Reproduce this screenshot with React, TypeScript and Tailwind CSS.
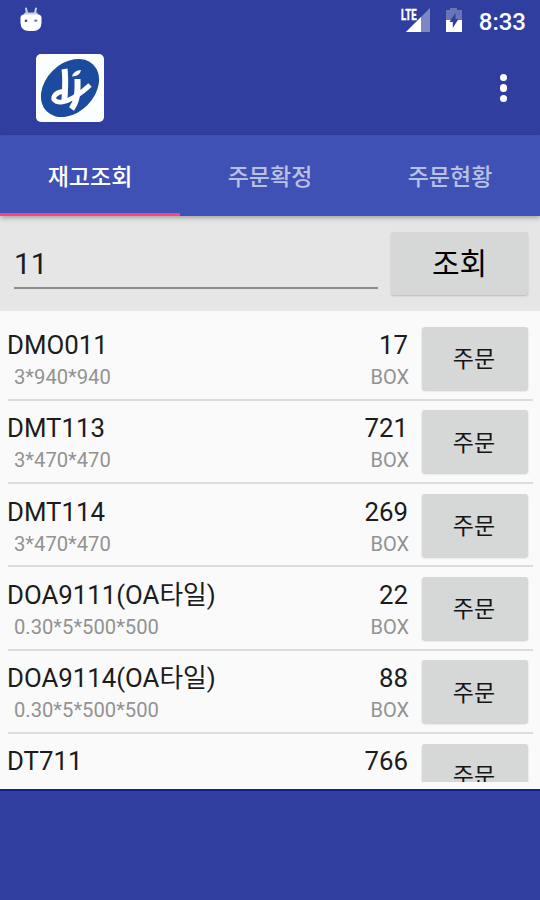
const tabs = ['재고조회', '주문확정', '주문현황'];

interface StockItem {
  code: string;
  spec?: string;
  qty: number;
}

const items: StockItem[] = [
  { code: 'DMO011', spec: '3*940*940', qty: 17 },
  { code: 'DMT113', spec: '3*470*470', qty: 721 },
  { code: 'DMT114', spec: '3*470*470', qty: 269 },
  { code: 'DOA9111(OA타일)', spec: '0.30*5*500*500', qty: 22 },
  { code: 'DOA9114(OA타일)', spec: '0.30*5*500*500', qty: 88 },
  { code: 'DT711', qty: 766 },
];

function DebugIcon() {
  return (
    <svg width="24" height="26" viewBox="0 0 24 26" fill="none">
      <path d="M7 1.5 L8 6 M17 1.5 L16 6" stroke="#c9cdea" strokeWidth="2" strokeLinecap="round" />
      <path d="M6 5.5 H18 L20 8.5 H4 Z" fill="#c9cdea" />
      <path d="M1.5 11 Q1.5 7.5 5 7.5 H19 Q22.5 7.5 22.5 11 V16 Q22 24 14 24 H10 Q2 24 1.5 16 Z" fill="#fff" />
      <circle cx="7" cy="13.7" r="1.3" fill="#303f9f" />
      <ellipse cx="16.8" cy="13.7" rx="1.8" ry="1.1" fill="#6d78bb" />
    </svg>
  );
}

function SignalIcon() {
  return (
    <svg width="32" height="26" viewBox="0 0 32 26">
      <path d="M31 1 V25 H7 Z" fill="#7d87c4" />
      <path d="M22 10 V25 H7 Z" fill="#fff" />
      <text x="2" y="12.5" fill="#fff" stroke="#fff" strokeWidth="0.3" fontSize="14.5" fontWeight="800" fontFamily="Roboto, sans-serif" textLength="15.5" lengthAdjust="spacingAndGlyphs">LTE</text>
    </svg>
  );
}

function BatteryIcon() {
  return (
    <svg width="18" height="26" viewBox="0 0 18 26">
      <path d="M5 1 H12 V3 H17 V13 H1 V3 H5 Z" fill="#6873b8" />
      <path d="M1 13 H17 V25 H1 Z" fill="#fff" />
      <path d="M10.5 6 L4.5 15 H7.8 V21 L13.5 12 H10.5 Z" fill="#303f9f" />
    </svg>
  );
}

function Logo() {
  return (
    <svg width="68" height="68" viewBox="0 0 68 68" fill="none">
      <rect width="68" height="68" rx="5" fill="#fcfdfd" />
      <ellipse cx="34" cy="34" rx="33" ry="24.5" transform="rotate(-45 34 34)" fill="#1b4b9e" />
      <g stroke="#fff" strokeLinecap="butt" strokeLinejoin="round">
        <path d="M28.5 15 C30 25 29 35 28.5 46" strokeWidth="6" />
        <path d="M28 37.5 C21 37.5 15.5 43 18.5 46 C22 50 30 48 37.5 43.5 C45 39 49 36 54 31" strokeWidth="4.8" />
        <path d="M41.5 25 C41.5 36 42.5 45 35.5 55" strokeWidth="6" />
        <path d="M36 22.5 Q38 16 45 16 Q44 22 36 22.5 Z" fill="#fff" stroke="none" />
      </g>
    </svg>
  );
}

function StockRow({ item }: { item: StockItem }) {
  return (
    <li className="flex h-[83.3px] shrink-0 border-b-2 border-[#dcdcdc] last:h-[78px] last:border-0">
      <div className="flex-1 pt-[11.5px] whitespace-nowrap">
        <p className="-ml-px text-[25.8px] leading-[32px] text-[#1c1c1c]">{item.code}</p>
        {item.spec && <p className="pl-1.5 text-[20.2px] leading-8 text-[#929292]">{item.spec}</p>}
      </div>
      <div className="pt-[11.5px] text-right">
        <p className="text-[25.8px] leading-[32px] text-[#1c1c1c]">{item.qty}</p>
        {item.spec && <p className="-mr-px text-[20px] leading-8 text-[#929292]">BOX</p>}
      </div>
      <button className="mt-[9.7px] mr-[5px] ml-[14px] h-[63px] w-[106px] rounded-[3px] bg-[#d6d7d7] pt-1 pr-2 pl-1.5 text-[23px] text-[#151515] shadow-[0_1px_2px_rgba(0,0,0,0.2)]">
        주문
      </button>
    </li>
  );
}

export default function App() {
  return (
    <div className="flex h-[900px] w-[540px] flex-col overflow-hidden bg-[#303f9f] font-['Roboto','Noto_Sans_CJK_KR',sans-serif]">
      <div className="flex h-10 shrink-0 items-center justify-between pr-3.5 pl-[19px] text-white">
        <DebugIcon />
        <div className="flex items-center">
          <SignalIcon />
          <span className="ml-3.5"><BatteryIcon /></span>
          <span className="ml-4 pt-1 text-[24px] leading-8 font-medium">8:33</span>
        </div>
      </div>

      <header className="flex h-[95px] shrink-0 items-center justify-between pr-[33px] pl-9">
        <Logo />
        <div className="flex flex-col gap-[3px] pt-px">
          <span className="size-[7.5px] rounded-full bg-white" />
          <span className="size-[7.5px] rounded-full bg-white" />
          <span className="size-[7.5px] rounded-full bg-white" />
        </div>
      </header>

      <nav className="relative z-10 grid h-[81px] shrink-0 grid-cols-3 bg-[#3f51b5] shadow-[0_2px_5px_rgba(0,0,0,0.3)]">
        {tabs.map((tab, i) => (
          <button
            key={tab}
            className={
              i === 0
                ? 'border-b-[3px] border-[#ff4081] pt-2 text-[23px] font-medium text-white'
                : 'border-b-[3px] border-transparent pt-2 text-[23px] font-medium text-[#b9c0e4]'
            }
          >
            {tab}
          </button>
        ))}
      </nav>

      <div className="flex h-[95px] shrink-0 bg-[#e6e6e6] pt-4 pr-3 pl-3.5">
        <input
          className="mr-[13px] h-[57px] min-w-0 flex-1 border-b-2 border-[#8c8c8c] pt-2 text-[30px] text-[#1c1c1c] outline-none"
          defaultValue="11"
        />
        <button className="h-[63px] w-[137px] rounded-[3px] bg-[#d6d7d7] text-[30px] leading-none text-black shadow-[0_1px_2px_rgba(0,0,0,0.2)]">
          조회
        </button>
      </div>

      <main className="h-[480px] shrink-0 border-b-2 border-[#14218a] bg-[#fafafa] pt-[6.5px] pb-[7px]">
        <ul className="flex h-full flex-col overflow-hidden pr-[7px] pl-2">
          {items.map((item) => (
            <StockRow key={item.code} item={item} />
          ))}
        </ul>
      </main>
    </div>
  );
}
